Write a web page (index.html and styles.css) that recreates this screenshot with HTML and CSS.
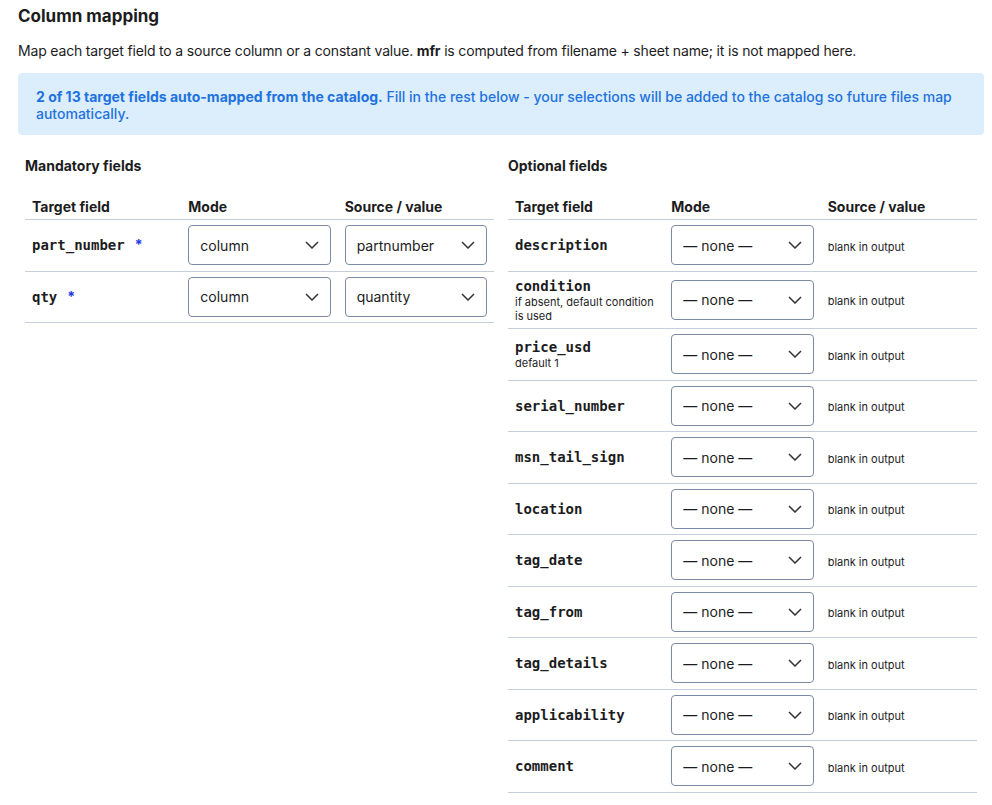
FILE: index.html
```html
<!DOCTYPE html>
<html lang="en">
<head>
    <meta charset="UTF-8">
    <meta name="viewport" content="width=device-width, initial-scale=1.0">
    <title>Column mapping</title>

    <link rel="stylesheet" href="styles.css">

</head>
<body>

    <div class="mapping-wrapper">
        <h3 class="page-title">Column mapping</h3>
        <p class="intro">Map each target field to a source column or a constant value. <strong>mfr</strong> is computed from filename + sheet name; it is not mapped here.</p>

        <div class="info-box">
            <strong>2 of 13 target fields auto-mapped from the catalog.</strong> Fill in the rest below - your selections will be added to the catalog so future files map automatically.
        </div>

        <div class="columns">
            <div class="col">
                <h4 class="col-title">Mandatory fields</h4>
                <table class="map-table">
                    <thead>
                        <tr>
                            <th>Target field</th>
                            <th>Mode</th>
                            <th>Source / value</th>
                        </tr>
                    </thead>
                    <tbody>
                        <tr>
                            <td><code class="field">part_number</code> <span class="req">*</span></td>
                            <td>
                                <div class="select-wrap">
                                    <select><option>column</option></select>
                                    <svg class="chev" width="14" height="8" viewBox="0 0 14 8"><path d="M1 1l6 6 6-6" fill="none" stroke="#333" stroke-width="1.5"/></svg>
                                </div>
                            </td>
                            <td>
                                <div class="select-wrap">
                                    <select><option>partnumber</option></select>
                                    <svg class="chev" width="14" height="8" viewBox="0 0 14 8"><path d="M1 1l6 6 6-6" fill="none" stroke="#333" stroke-width="1.5"/></svg>
                                </div>
                            </td>
                        </tr>
                        <tr>
                            <td><code class="field">qty</code> <span class="req">*</span></td>
                            <td>
                                <div class="select-wrap">
                                    <select><option>column</option></select>
                                    <svg class="chev" width="14" height="8" viewBox="0 0 14 8"><path d="M1 1l6 6 6-6" fill="none" stroke="#333" stroke-width="1.5"/></svg>
                                </div>
                            </td>
                            <td>
                                <div class="select-wrap">
                                    <select><option>quantity</option></select>
                                    <svg class="chev" width="14" height="8" viewBox="0 0 14 8"><path d="M1 1l6 6 6-6" fill="none" stroke="#333" stroke-width="1.5"/></svg>
                                </div>
                            </td>
                        </tr>
                    </tbody>
                </table>
            </div>

            <div class="col">
                <h4 class="col-title">Optional fields</h4>
                <table class="map-table">
                    <thead>
                        <tr>
                            <th>Target field</th>
                            <th>Mode</th>
                            <th>Source / value</th>
                        </tr>
                    </thead>
                    <tbody id="optional-rows"></tbody>
                </table>
            </div>
        </div>
    </div>

    <script>
        const optionalFields = [
            { name: "description" },
            { name: "condition", note: "if absent, default condition is used" },
            { name: "price_usd", note: "default 1" },
            { name: "serial_number" },
            { name: "msn_tail_sign" },
            { name: "location" },
            { name: "tag_date" },
            { name: "tag_from" },
            { name: "tag_details" },
            { name: "applicability" },
            { name: "comment" }
        ]

        const chevron = '<svg class="chev" width="14" height="8" viewBox="0 0 14 8"><path d="M1 1l6 6 6-6" fill="none" stroke="#333" stroke-width="1.5"/></svg>'

        const tbody = document.getElementById("optional-rows")

        optionalFields.forEach(function(f) {
            const tr = document.createElement("tr")
            let note = f.note ? '<div class="note">' + f.note + '</div>' : ''
            tr.innerHTML =
                '<td><code class="field">' + f.name + '</code>' + note + '</td>' +
                '<td><div class="select-wrap"><select><option>— none —</option><option>column</option><option>constant</option></select>' + chevron + '</div></td>' +
                '<td><span class="blank">blank in output</span></td>'
            tbody.appendChild(tr)
        })
    </script>
</body>
</html>
```

FILE: styles.css
```css
body {
    margin: 0;
    font-family: Inter, "Noto Sans", "Liberation Sans", sans-serif;
    font-size: 14px;
    color: #1c1c1e;
    background: #fff;
}
.mapping-wrapper {
    padding: 5px 8px 0 18px;
}
.page-title {
    font-size: 17px;
    font-weight: 700;
    line-height: 22px;
    margin: 0 0 14px;
}
.intro {
    margin: 0 0 12px;
    line-height: 20px;
    letter-spacing: -0.17px;
}
.info-box {
    background: #dcedfb;
    color: #1e73de;
    border-radius: 4px;
    padding: 15px 18px 13px;
    line-height: 17px;
    font-weight: 500;
}
.info-box strong {
    font-weight: 700;
}
.columns {
    display: grid;
    grid-template-columns: 1fr 1fr;
    margin-top: 21px;
}
.col {
    padding: 0 7px;
}
.col-title {
    font-size: 14px;
    font-weight: 700;
    line-height: 20px;
    margin: 0 0 17px;
}
.map-table {
    width: 100%;
    border-collapse: collapse;
    table-layout: fixed;
}
.map-table th {
    text-align: left;
    font-weight: 700;
    padding: 4px 7px 2px;
    line-height: 20px;
    border-bottom: 1px solid #c5cfdb;
}
.map-table td {
    padding: 5px 7px 5.5px;
    vertical-align: middle;
    border-bottom: 1px solid #c5cfdb;
}
.field {
    font-family: "DejaVu Sans Mono", "Liberation Mono", monospace;
    font-size: 14px;
    font-weight: 700;
    line-height: 17px;
    color: #1c1c1e;
}
.req {
    color: #2237e6;
    font-weight: 700;
    margin-left: 6px;
}
.note {
    font-size: 11px;
    line-height: 14px;
    color: #1c1c1e;
}
.blank {
    font-size: 11px;
    color: #1c1c1e;
}
.select-wrap {
    position: relative;
}
.select-wrap select {
    -webkit-appearance: none;
    appearance: none;
    width: 100%;
    height: 40px;
    border: 1px solid #7d8aa3;
    border-radius: 4px;
    background: #fff;
    padding: 0 30px 0 11px;
    font-family: inherit;
    font-size: 14px;
    color: #1c1c1e;
}
.chev {
    position: absolute;
    right: 12px;
    top: 16px;
    pointer-events: none;
}
```
